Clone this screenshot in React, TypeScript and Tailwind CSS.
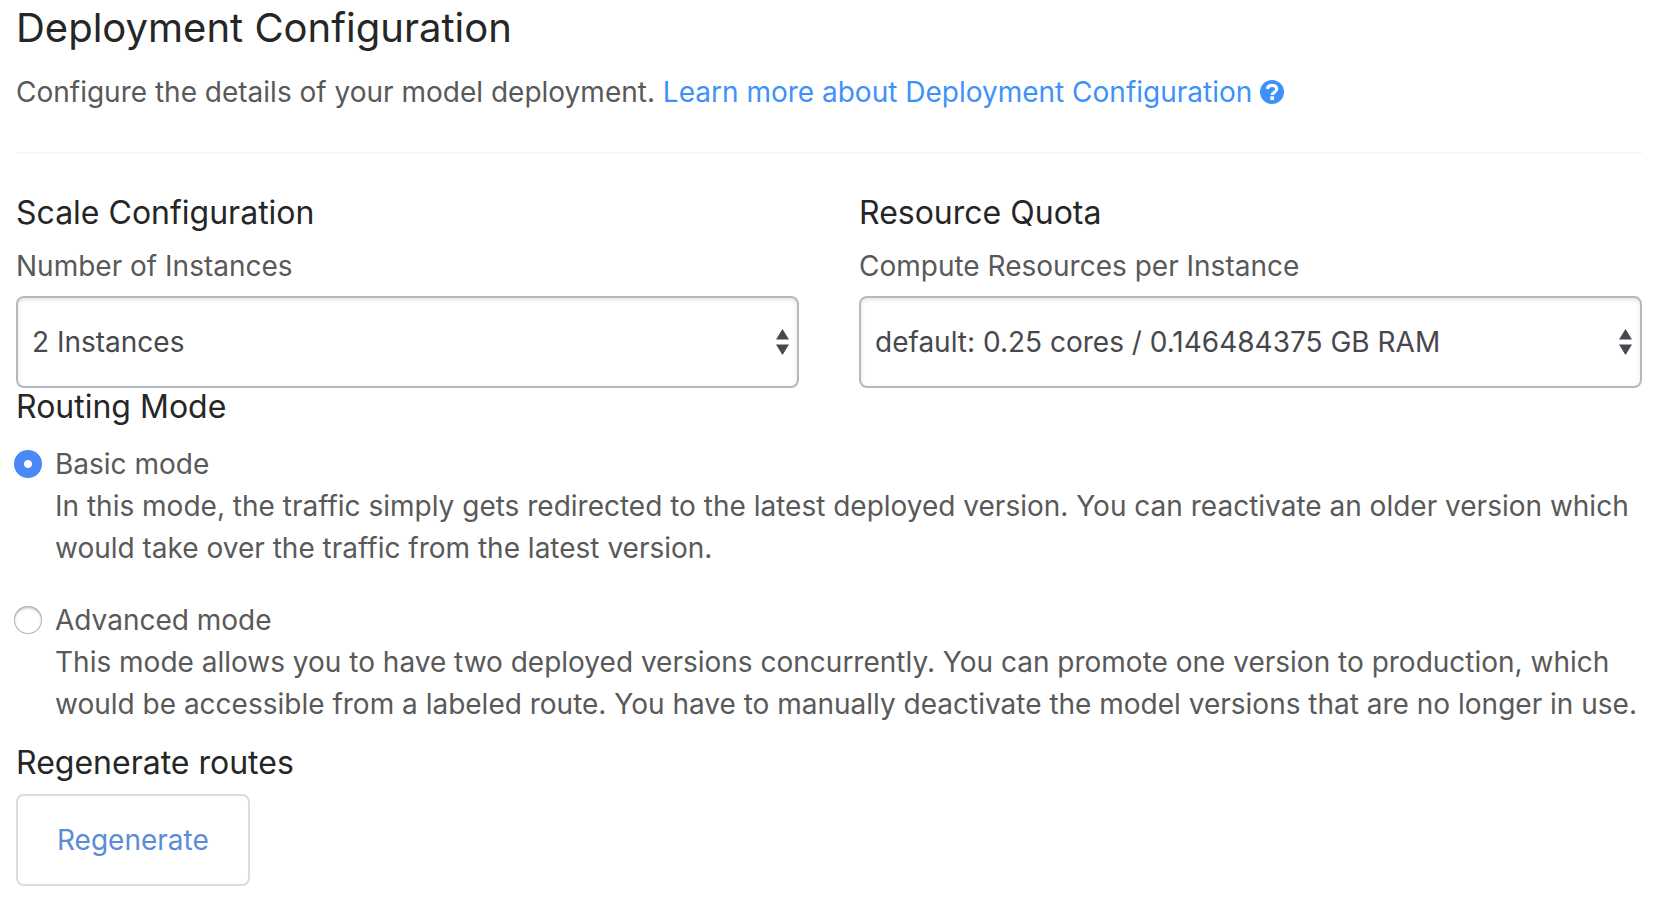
import { useState } from "react";
import type { ReactNode } from "react";

function HelpIcon() {
  return (
    <svg
      aria-hidden="true"
      viewBox="0 0 24 24"
      className="inline size-6 align-[-2px]"
      fill="none"
    >
      <circle cx="12" cy="12" r="12" fill="currentColor" />
      <path d="M7.300 8.900C7.800 6.500 9.600 5.400 12 5.400c2.700 0 4.700 1.400 4.700 3.700 0 3.300-4.500 3.100-4.500 6" stroke="#fff" strokeWidth="3.200" />
      <path d="M10.300 16.300h3.800v3.700h-3.800z" fill="#fff" />
    </svg>
  );
}

function SelectField({ id, label, options }: { id: string; label: string; options: string[] }) {
  return (
    <div>
      <label htmlFor={id} className="block leading-10">
        {label}
      </label>
      <div className="mt-2.5 grid items-center">
        <select
          id={id}
          className="col-start-1 row-start-1 h-23 w-full appearance-none rounded-lg border-2 border-[#b5b9be] bg-white pr-10 pl-3.5 text-[#46484d] shadow-[inset_0_2px_4px_rgba(0,0,0,0.1)]"
        >
          {options.map((option) => (
            <option key={option}>{option}</option>
          ))}
        </select>
        <svg
          aria-hidden="true"
          viewBox="0 0 13 26"
          className="pointer-events-none col-start-1 row-start-1 mr-[10px] h-[26px] w-[13px] justify-self-end fill-[#46484d]"
        >
          <path d="M6.5 0 13 10.5H0Z" />
          <path d="M0 15.500H13L6.500 26Z" />
        </svg>
      </div>
    </div>
  );
}

function ModeOption({
  id,
  title,
  checked,
  onSelect,
  children,
}: {
  id: string;
  title: string;
  checked: boolean;
  onSelect: () => void;
  children: ReactNode;
}) {
  return (
    <div className="flex items-start gap-[13px]">
      <input
        id={id}
        type="radio"
        name="routing-mode"
        checked={checked}
        onChange={onSelect}
        aria-describedby={`${id}-description`}
        className="mt-[7px] size-7 shrink-0 appearance-none rounded-full bg-white shadow-[inset_0_0_0_1px_#b4b4b4,inset_0_2px_3px_rgba(0,0,0,0.25)] checked:bg-[radial-gradient(circle,#fff_3.5px,#4a88f7_4.5px)] checked:shadow-none"
      />
      <div className="min-w-0 leading-[42px]">
        <label htmlFor={id} className="block">
          {title}
        </label>
        <p id={`${id}-description`}>{children}</p>
      </div>
    </div>
  );
}

export default function App() {
  const [mode, setMode] = useState("basic");

  return (
    <main className="bg-white pr-[26px] pb-5 pl-4 font-[Inter,sans-serif] text-[28px] text-[#595959]">
      <h1 className="pt-1 text-[40px] leading-12 text-[#262626]">Deployment Configuration</h1>
      <p className="mt-5 leading-10">
        Configure the details of your model deployment.{" "}
        <a href="#learn-more" className="text-[#3f91fa]">
          Learn more about Deployment Configuration <HelpIcon />
        </a>
      </p>
      <hr className="mt-10 border-t-2 border-[#f7f7f7]" />

      <div className="mt-10 grid grid-cols-2 gap-15">
        <section>
          <h2 className="text-[32px] leading-[38px] text-[#262626]">Scale Configuration</h2>
          <div className="mt-3.5">
            <SelectField
              id="instances"
              label="Number of Instances"
              options={["2 Instances", "1 Instance", "3 Instances"]}
            />
          </div>
        </section>
        <section>
          <h2 className="text-[32px] leading-[38px] text-[#262626]">Resource Quota</h2>
          <div className="mt-3.5">
            <SelectField
              id="resources"
              label="Compute Resources per Instance"
              options={["default: 0.25 cores / 0.146484375 GB RAM"]}
            />
          </div>
        </section>
      </div>

      <section>
        <h2 className="text-[32px] leading-[38px] text-[#262626]">Routing Mode</h2>
        <div className="mt-[17px] -ml-0.5 flex flex-col gap-[30px]">
          <ModeOption
            id="basic"
            title="Basic mode"
            checked={mode === "basic"}
            onSelect={() => setMode("basic")}
          >
            In this mode, the traffic simply gets redirected to the latest deployed version. You can
            reactivate an older version which would take over the traffic from the latest version.
          </ModeOption>
          <ModeOption
            id="advanced"
            title="Advanced mode"
            checked={mode === "advanced"}
            onSelect={() => setMode("advanced")}
          >
            This mode allows you to have two deployed versions concurrently. You can promote one
            version to production, which would be accessible from a labeled route. You have to
            manually deactivate the model versions that are no longer in use.
          </ModeOption>
        </div>
      </section>

      <section>
        <h2 className="mt-[19px] text-[32px] leading-[38px] text-[#262626]">Regenerate routes</h2>
        <button
          type="button"
          className="mt-3 h-23 rounded-lg border-2 border-[#dcdcdc] bg-white px-[39px] text-[#5a8cd7]"
        >
          Regenerate
        </button>
      </section>
    </main>
  );
}
